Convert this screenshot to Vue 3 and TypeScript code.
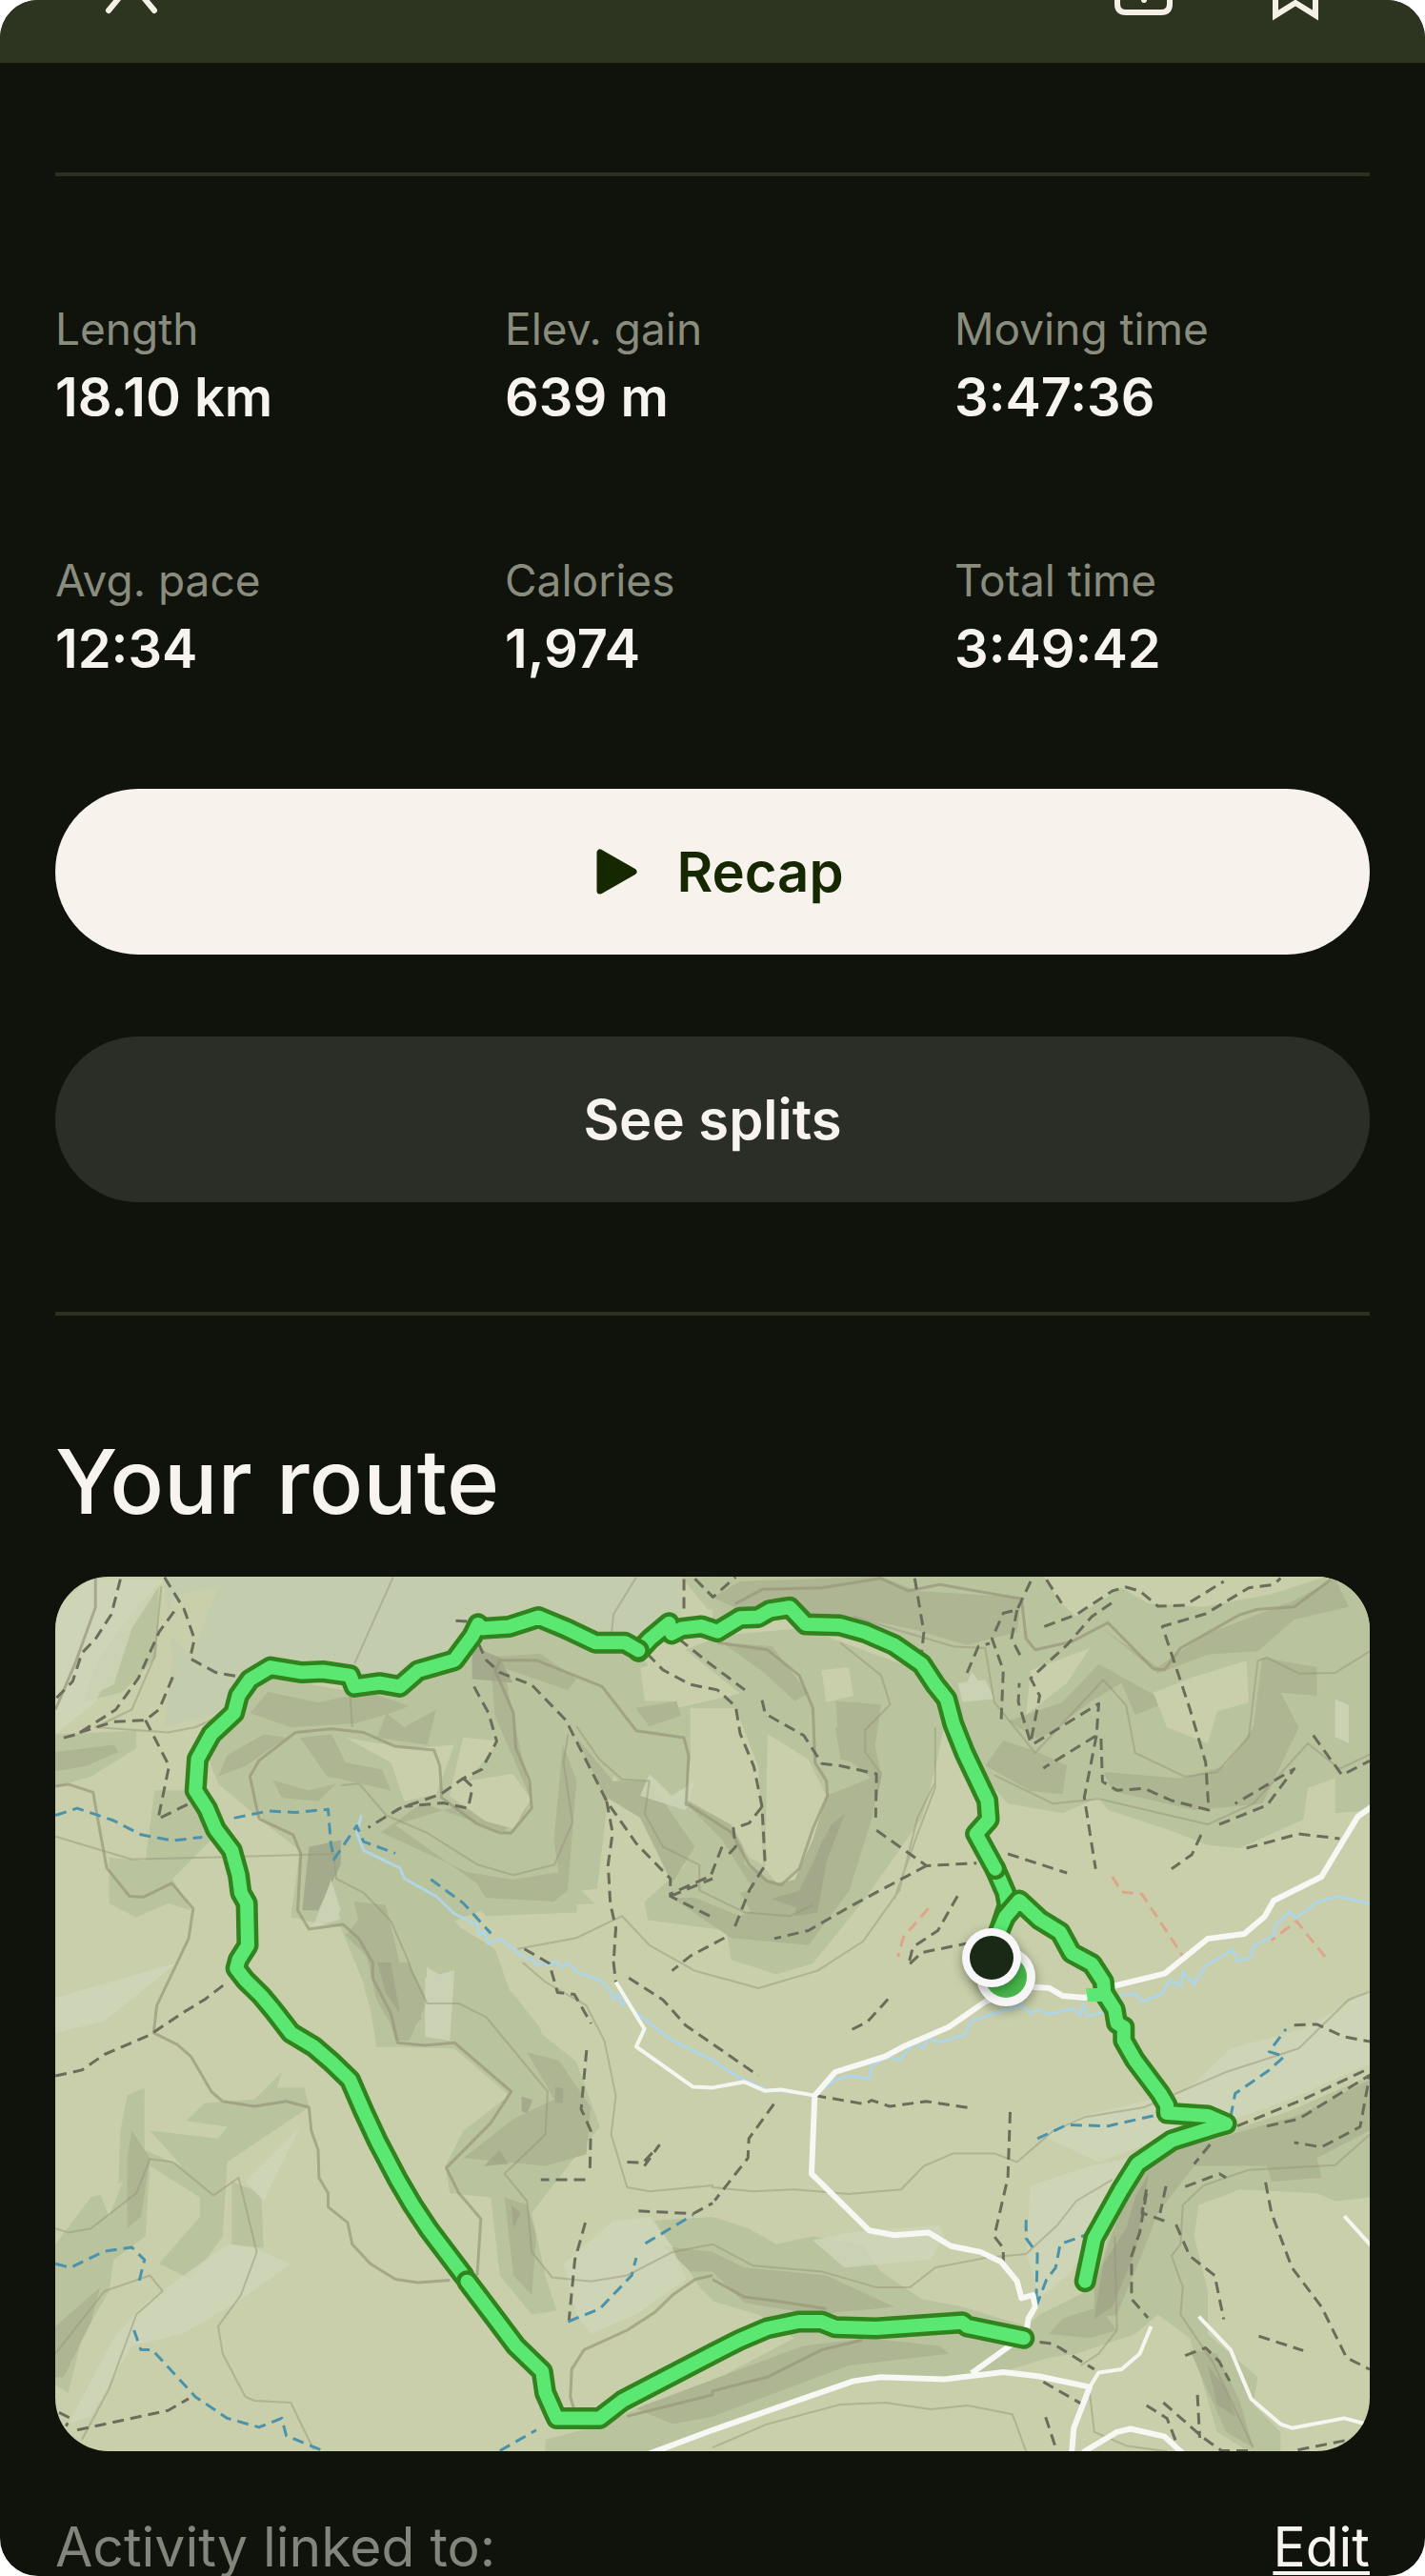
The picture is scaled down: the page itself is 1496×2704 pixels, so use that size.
<script setup lang="ts">
interface Stat {
  label: string
  value: string
}

interface Tile {
  x: number
  y: number
  sx: number
  sy: number
}

interface Layer {
  name: string
  shapes: string
}

const stats: Stat[] = [
  { label: 'Length', value: '18.10 km' },
  { label: 'Elev. gain', value: '639 m' },
  { label: 'Moving time', value: '3:47:36' },
  { label: 'Avg. pace', value: '12:34' },
  { label: 'Calories', value: '1,974' },
  { label: 'Total time', value: '3:49:42' },
]

// The map data is stored per tile; every tile has its own origin and resolution.
const tiles: Record<string, Tile> = {
  A: { x: -58, y: -175, sx: 2.096, sy: 2.703 },
  B: { x: 690, y: -55, sx: 2.096, sy: 3 },
  C: { x: -58, y: 405, sx: 2.096, sy: 2.435 },
  D: { x: 690, y: 405, sx: 2.096, sy: 2.435 },
  E: { x: 242, y: -15, sx: 2.096, sy: 2.613 },
}

// A letter selects the tile, a slash starts a new sub-path.
function project(source: string): string {
  let tile = tiles.A
  return source
    .split('/')
    .map((part) => {
      const points: string[] = []
      let x: number | null = null
      for (const token of part.trim().split(/\s+/)) {
        if (tiles[token]) {
          tile = tiles[token]
        } else if (x === null) {
          x = Number(token)
        } else {
          const px = tile.x + x / tile.sx
          const py = tile.y + Number(token) / tile.sy
          points.push(`${px.toFixed(1)} ${py.toFixed(1)}`)
          x = null
        }
      }
      return `M${points.join('L')}`
    })
    .join('')
}

const relief: Layer[] = [
  { name: 'plateau', shapes: 'A 360 470 1500 470 1500 600 1420 680 1300 650 1185 590 1060 610 1000 710 880 780 770 750 595 730 480 860 360 900 380 700' },
  {
    name: 'mid',
    shapes: `A 520 820 600 760 780 800 900 790 1040 700 1060 640 1200 620 1400 700 1480 900 1568 900 1568 1060 1500 1180 1430 1060 1370 960 1340 1080 1310 1400 1060 1420 1000 1450 1080 1568 800 1568 760 1460 640 1440 660 1250 590 1180 480 1060 450 960
      / A 122 920 300 910 300 960 200 1040 122 1070
      / A 340 1080 430 1080 480 1200 380 1330 420 1420 370 1400 300 1440 240 1400 240 1270 320 1280
      / A 300 560 350 490 345 700 270 800 180 830 220 700
      / E 430 200 780 250 860 400 1000 360 880 240 960 200 1140 180 1400 300 1450 440 1430 560 1400 700 1270 930 1160 1100 1080 1130 980 1090 970 1010 790 980 790 930 880 830 760 650 650 460 640 700 640 960 440 970 340 800 340 500 230 370 0 460 0 350 230 360 400 330
      / E 870 40 1568 40 1568 140 1300 180 1140 100 1000 130 930 130
      / E 100 560 180 780 250 900 330 960 460 1060 500 1200 560 1290 640 1370 640 1568 450 1568 490 1450 370 1310 200 1330 180 1180 120 1000 30 980
      / B 0 165 1446 165 1446 900 1370 910 1370 800 1310 830 1300 930 1160 1020 1090 1010 1000 960 870 900 850 860 770 910 650 880 600 800 560 700 480 440 200 300 0 300
      / C 800 60 860 0 1060 10 1130 80 1190 170 1200 240 1270 260 1320 420 1250 520 1170 640 1200 800 1225 890 1170 900 1100 800 1080 600 990 590 980 520 1020 430 1120 340 1000 220 840 215
      / C 280 340 318 320 318 480 400 520 330 430 480 450 500 420 410 405 450 360 560 350 620 280 610 320 670 320 680 370 500 510 490 700 420 810 350 770 440 650 440 600 330 520 320 700 250 760 240 840 180 960 150 1100 122 1080 122 720 200 600 260 580 265 430
      / C 510 560 575 590 580 730 510 720
      / C 1440 660 1570 650 1570 865 1540 830 1500 760
      / D 0 650 80 680 140 720 220 700 330 720 370 790 460 860 550 880 690 930 720 900 840 830 870 700 900 600 960 500 1140 430 1270 380 1446 290 1446 600 1370 610 1330 590 1160 580 1070 620 1060 700 1090 840 1090 950 1200 1060 1190 1130 1250 1200 1250 1250 1180 1250 1110 1200 1050 960 980 900 930 950 800 1000 740 1010 600 1060 400 1060 300 1075 0 1200 0 1070 180 960 100 900 0 865
      / C 1200 1250 1200 1220 1330 1180 1420 1130 1570 1066 1570 1200 1430 1250`,
  },
  {
    name: 'dark',
    shapes: `A 590 800 700 830 810 800 900 840 860 860 780 890 640 900 550 860
      / A 580 920 630 930 540 1010 480 1040 500 980
      / A 122 970 250 950 260 970 190 1010 122 1025
      / A 660 930 730 920 760 1000 840 1020 860 1080 760 1050 720 1040
      / A 850 860 890 900 960 850 940 950 830 930
      / A 600 1050 680 1080 740 1060 700 1110 620 1100
      / A 760 1490 820 1400 850 1470 860 1568 820 1568
      / E 450 260 560 250 640 320 620 350 480 290 500 420 540 650 480 740 390 700 300 660 210 740 400 850 500 870 600 850 590 760 610 500 640 600 620 900 590 930 440 920 420 880 240 720 400 660 520 700 540 650 460 420
      / E 640 480 720 600 800 600 900 780 850 880 780 700 700 640
      / E 770 400 860 380 870 420 800 450
      / E 890 500 970 560 1000 700 1010 830 1060 870 1110 880 1150 800 1190 640 1310 580 1290 700 1240 900 1150 1050 980 1030 850 920 900 920 1000 970 1050 940 960 760 880 660
      / E 960 220 1070 230 1150 360 1120 380 1050 300
      / E 1210 380 1310 390 1290 560 1220 540
      / E 150 930 220 940 270 1200 300 1250 250 1310 200 1200
      / C 820 0 900 0 940 100 900 200 870 200
      / C 1160 230 1230 250 1300 370 1290 490 1200 520 1020 500 1130 400 1220 350
      / C 1110 600 1160 620 1180 700 1170 850 1130 800
      / C 290 430 330 500 310 650 280 680 280 500
      / C 122 930 220 830 200 920 140 1060 122 1060
      / C 1400 1140 1570 1066 1570 1160 1480 1180
      / C 1460 725 1570 740 1570 790 1520 790
      / B 0 230 60 180 370 165 450 210 680 230 670 340 560 380 440 330 300 290 190 290 150 240 60 270
      / B 860 330 980 450 1080 350 1280 240 1370 170 1400 260 1280 300 1200 400 1090 410 980 470
      / B 850 440 1000 560 930 600 900 500 830 560 720 680 650 620 770 560
      / B 1210 420 1330 450 1330 540 1250 530 1290 640 1210 880 1060 900 880 840 860 780 1030 800 1130 760 1190 640
      / B 640 680 720 720 780 760 770 850 700 840 600 760
      / B 270 640 350 650 370 780 300 980 240 1100 170 1240 90 1230 60 1160 160 1130 250 860 350 800 280 720
      / D 950 500 1140 440 1290 390 1446 300 1446 430 1330 500 1340 550 1230 560 1220 520 1060 520 980 640 940 760 890 900 840 910 840 830 880 690
      / D 0 740 70 780 250 800 400 880 230 900 70 870 0 790
      / D 0 1066 200 980 340 960 500 980 520 1000 300 1030 0 1160
      / D 770 910 850 880 890 940 830 960 740 950
      / D 1050 990 1110 1000 1160 1120 1190 1240 1130 1200`,
  },
  {
    name: 'deep',
    shapes: `A 680 1240 750 1220 750 1290 700 1420 665 1420
      / E 410 230 470 260 500 330 410 320
      / E 1130 900 1200 720 1230 690 1190 820 1170 960 1120 970
      / C 830 0 860 0 880 130 850 80
      / C 1100 480 1118 515 1065 520
      / C 1125 620 1145 640 1130 680
      / C 1148 342 1172 352 1160 386 1148 380
      / C 1222 318 1240 322 1238 360 1222 358
      / B 240 1000 270 950 250 1040 230 1160 190 1210 130 1180 200 1150
      / D 860 770 910 680 930 600 960 540 930 740 880 880 840 910
      / D 1090 1030 1130 1090 1150 1160 1110 1130`,
  },
  {
    name: 'base',
    shapes: `A 380 530 480 500 420 700 360 620
      / A 760 930 900 960 1000 950 960 1090 890 1110 860 1000
      / E 390 480 470 490 400 600 500 580 540 650 500 730 440 710 360 640
      / E 780 290 870 250 900 330 860 380 790 380
      / E 890 400 990 400 1040 560 1050 830 1020 810 980 720 880 650 890 540
      / E 1060 470 1150 540 1190 640 1160 760 1120 870 1080 880 1055 840
      / B 240 460 300 450 310 540 250 560
      / B 970 530 1060 480 1175 430 1180 560 1110 590 1090 690 1000 640
      / B 700 460 830 390 780 500 690 600
      / B 730 165 1350 165 1230 220 1080 260 960 250 900 200 800 290 760 240
      / E 650 900 780 880 800 1000 700 960 / C 220 590 270 560 240 650`,
  },
  {
    name: 'light',
    shapes: `A 122 560 200 480 360 480 280 640 210 830 122 920
      / A 220 640 290 620 250 780 180 820
      / A 730 1340 750 1420 710 1460
      / E 100 870 120 980 60 1000 / E 310 1110 365 1150 350 1280 310 1290
      / E 800 580 850 640 900 600 880 680 780 640
      / E 1490 350 1510 300 1550 370
      / C 122 90 390 0 230 150 122 180 / C 935 40 1000 20 990 200 935 190
      / C 540 560 660 420 580 610 / C 500 720 560 730 640 770 520 870 400 950 290 980 200 1160 150 1180 250 960 320 870
      / C 1240 770 1350 660 1430 650 1480 730 1510 810 1400 900 1300 950 1270 900
      / D 700 570 830 520 920 500 860 660 790 790 720 860 690 740
      / D 720 440 820 390 1040 330 1140 220 1300 170 1446 70 1446 260 1270 350 1150 400 1010 440 850 510
      / D 220 710 300 690 500 670 510 700 480 760 290 780
      / B 540 500 600 490 620 550 550 560 / B 1370 550 1400 570 1400 690 1370 670`,
  },
]

const contours = `A 210 475 210 560 165 720 122 850
  / A 122 1068 150 1062 205 1085 215 1160 235 1300 285 1380 315 1382 378 1343 425 1415 415 1500 390 1568 C 345 110 338 180 390 210 420 240 465 330 490 355 560 368 630 355 680 370 685 430 700 480 702 550 722 590 722 625 765 665 775 720 815 770 870 810 920 818 990 812
  / A 570 1160 550 1040 570 995 650 915 730 905 800 915 870 955 955 965 968 1010 972 1100 1050 1175 1100 1200 1125 1200 1170 1130 1165 1050 1135 960 1130 860 1090 740 1100 710 1180 710 1325 785 1400 910 1505 930 1515 980 1510 1120 E 880 660 980 740 1020 830 1060 875 1090 885 1130 840 1160 730 1192 640 1190 600 1165 550 1160 400 1130 310 1060 240 950 220
  / A 570 1160 645 1205 662 1260 655 1420 680 1473 755 1460 790 1500 820 1568 C 820 40 860 130 875 205 935 212 1000 205 1125 330 1080 410 982 525 1010 590 1058 655 1050 800
  / B 50 250 110 205 240 200 370 170 430 210 500 190 680 235 690 360 710 395 790 370 870 310 970 455 995 458 1030 390 1160 285 1200 268 1280 260 1360 175
  / C 1568 800 1530 810 1480 850 1440 895 1380 940 1285 990 1258 1040 1255 1110 1265 1150
  / C 1380 1160 1568 1105 D 0 1095 120 1060 240 990 330 965 / D 0 810 70 855 140 865 250 885`

const minorContours = `A 865 475 780 720 / A 770 800 775 900 / A 750 1065 790 1060 850 1150 940 1200 1050 1290 1130 1320 1220 1290 1260 1170 1240 1000 1250 920
  / A 1400 475 1350 580 1345 640 / A 735 1270 740 1330 800 1370 860 1450 900 1568 C 905 20 940 105 1010 105 1070 140 1205 330 1200 440 1110 540 1160 610 1170 740 1215 805 1300 815 1380 800 1480 740 1568 720
  / A 122 1210 290 1275 740 1260 / A 355 500 340 700 290 850 210 900 370 915 430 900 490 865
  / E 640 450 690 540 740 595 800 600 790 690 830 780 910 830 910 900 1010 960 1110 970 1160 940
  / E 510 1060 640 1030 740 970 800 1050 900 1120 1040 1168 1170 1120 1270 1040 1350 900 1390 700 1430 600
  / E 1220 220 1310 310 1330 390 1275 460 1275 520 1310 580 1300 640
  / C 122 680 150 690 200 680 300 590 330 502 380 510 470 595 525 550 565 740 530 850 480 930 490 1000 540 1110 560 1120 640 1125 690 1245
  / C 122 1000 230 840 330 800 358 840 300 900 240 1090 180 1220
  / C 1150 0 1200 50 1290 110 1330 200 1355 340 1345 440 1380 575 1430 585 1568 570 D 0 575 90 585 180 580 300 592 415 580 465 520 530 488 620 488 670 510 750 430 820 395 950 370 1130 280 1290 220 1400 95 1446 75
  / D 0 720 90 775 240 790 360 830 435 830 490 780 600 755 690 745 760 670 800 610 880 555
  / D 1446 440 1370 518 1180 530 1080 570 1035 620 1030 720 1010 750 1035 830 1030 900 1100 1020 1190 1240
  / D 885 700 890 940 850 1000 810 1030 / D 0 1240 120 1180 280 1130 380 1125 480 1142 560 1132 660 1155 690 1250
  / D 830 1100 840 1200 910 1235 1000 1250 / B 310 290 400 330 530 385 600 390 620 560 710 720 860 490 910 570 930 720 1040 795 1110 780 1180 670 1200 430 1220 420 1290 470 1370 468 1446 400
  / B 490 640 490 830 450 980 400 1180 / B 620 790 750 880 850 865 1090 945 1190 880 1310 690 1380 770 1446 725`

const trails = `A 265 480 245 580 210 650 180 690 160 770 122 820 / A 383 572 350 630 305 760 255 850 170 920 135 932
  / A 362 475 405 565 428 650 418 705 475 745 530 758 / A 380 758 350 850 320 880 250 885 175 915 / A 320 880 372 1010 348 1160 415 1118
  / A 1003 598 1030 600 1070 710 1100 745 1170 780 1245 880 1335 1110 1400 1230 1475 1330 1475 1380 1568 1440
  / A 1043 785 1075 860 1093 940 1060 1020 1020 1045 970 1090 880 1130 810 1185 / A 1020 1045 1040 1070 1030 1130 975 1115 890 1125
  / A 1335 1110 1348 1200 1338 1290 1343 1400 1355 1470 1350 1568 C 1350 0 1355 50 / A 1475 1380 1568 1330
  / A 1505 480 1505 570 / A 1530 480 1568 530 / E 900 45 940 95 990 40
  / E 795 250 830 295 890 335 950 350 990 395 1000 470 1030 560 1048 670 1055 830 1020 900 988 1000
  / E 865 210 930 275 1010 350 / E 1048 378 1055 415 1140 475 1180 552 1220 558 1300 580 1298 700
  / E 1048 670 1020 715 985 730 990 780 975 800 / E 960 780 935 860 845 910
  / E 1300 735 1410 832 1520 825 / E 1410 832 1330 885 1240 945 1150 1010 1075 1032
  / E 965 1030 890 1080 850 1120 / E 1478 915 1435 1010 1380 1055 1370 1105 1400 1070 1500 1045
  / E 525 1060 580 1100 598 1180 635 1185 672 1265 / E 755 1140 830 1200 880 1270 1040 1408
  / E 1325 1198 1280 1260 1235 1288 / E 662 1338 650 1500 C 1285 390 1300 430 1298 530 / C 1288 555 1190 555
  / C 1405 635 1525 642 1568 615 / C 1288 665 1265 760 1252 915 / C 1380 510 1415 512 1450 468 1418 520
  / C 122 290 180 275 230 235 330 185 400 130 450 95 495 55 / C 170 1195 370 1145 415 1115 / C 130 1150 155 1165 145 1185
  / B 445 170 465 340 460 405 / B 700 180 670 270 640 280 615 360 640 460 635 625 / B 670 270 658 360 683 430
  / B 560 468 585 385 610 375 / B 735 175 768 248 / B 730 322 800 285 880 210 910 198 940 210 980 258 1040 255 1125 180
  / B 878 248 835 290 780 380 700 485 720 540 700 688 673 560 675 500 / B 708 690 850 565 845 665 728 768
  / B 845 665 818 860 843 1085 / B 855 675 858 810 890 838 950 832 1010 870 1092 900 1085 750 1050 580 990 322 1085 282 1180 200 1235 190 1250 170
  / B 1115 945 1220 885 1280 770 1150 880 / B 1075 978 1055 1040 1010 1085 / B 1175 1020 1290 975 1380 990
  / B 1322 665 1385 790 1446 745 / B 650 1038 780 1098
  / D 225 340 335 362 350 352 390 368 470 355 570 372 / D 135 362 80 450 78 500 5 608 / D 655 382 650 550 620 700 640 730 640 770
  / D 1280 160 1330 158 1390 190 1446 202 / D 1155 418 1300 350 1446 270 / D 1220 418 1290 400 1446 288 1425 420 1340 472 1280 460
  / D 1095 465 1060 515 / D 1040 573 1115 540 1130 550 / D 955 580 945 640 1005 665 / D 998 572 985 640 / D 955 590 940 690 922 750 922 860 958 908
  / D 1020 670 1050 750 1105 800 1125 912 / D 1217 562 1230 640 1275 780 1340 880 1395 1010 1446 1040 / D 1202 955 1300 992
  / D 1040 1005 1085 985 1115 1020 1138 1070 / D 720 970 750 975 840 1040 / D 728 1072 815 1130 / D 733 1162 758 1250
  / D 955 1132 1000 1165 1025 1240 / D 992 1125 1080 1215 1120 1248 1180 1248 / D 1067 1105 1072 1215 / D 1288 1246 1400 1220`

const waterTrails = `A 122 1150 170 1130 250 1165 310 1205 380 1222 445 1212 / A 515 1158 590 1138 650 1142 722 1133 728 1230 735 1275 785 1180 800 1225 870 1258
  / A 948 1332 1020 1400 1080 1485 / C 122 770 155 780 230 738 290 728 318 760 305 820 / C 295 940 310 990 335 990 430 1110 500 1165 570 1188 620 1165 630 1210 715 1250
  / C 1100 1248 1180 1195 / C 1250 918 1320 885 1390 800 1400 755 / C 1420 718 1525 645
  / D 715 450 780 415 870 418 985 388 / D 690 658 690 705 715 745 712 880 735 810 755 780 765 720 825 695
  / D 1140 395 1150 335 1225 275 1258 240 1225 228 1262 170`

const closedTrails = 'B 475 1210 420 1300 408 1362 / B 880 1110 900 1158 945 1165 1035 1360 / B 1348 1362 1285 1250 1230 1310'

const stream = `A 795 1150 785 1200 800 1250 880 1300 890 1330 960 1380 1000 1430 1050 1460 1055 1490 1065 1480 1075 1515 1100 1500 1150 1550
  C 1170 -8 1185 8 1195 -4 1205 8 1222 -4 1235 12 1250 2 1270 25 1320 45 1345 75 1350 95 1362 82 1370 110 1378 95 1390 120 1480 200 1568 250
  D 25 270 60 295 120 325 225 338 270 300 300 290 345 297 350 265 385 240 410 250 445 205 465 220 475 190 495 205 555 185 570 150 620 130 680 110 700 130 715 122 740 132 790 118 810 135 815 105 825 138 880 120 900 85 930 80 945 100 990 80 1005 45 1030 60 1035 25 1060 55
  B 1085 1390 1145 1340 1155 1375 1185 1365 1190 1330 1235 1295 1240 1260 1270 1220 1285 1240 1330 1190 1375 1172 1450 1195`

const roads = `B 1450 890 1420 920 1340 1110 1235 1185 1215 1235 1170 1290 1090 1305 995 1415 880 1455
  D 820 90 770 85 740 65 690 62 600 100 520 165 420 215 380 240 270 280 225 340 218 540 345 685 400 697 475 690 525 725 590 740 635 765 670 815 680 858 705 850 710 880 695 910 690 950 570 1050
  / C 1430 1255 1568 1195 D 310 1070 370 1060 510 1065 640 1047 720 1058 830 1085 795 1190 790 1260 / D 815 1252 890 1200 920 1192 995 1212 1040 1260`

const lanes = `C 1355 50 1418 170 1400 215 1525 318 1568 320 D 70 305 115 328 150 325 225 340
  / D 830 1085 850 1048 900 1040 940 1000 965 930 / D 1070 905 1140 990 1185 1115 1250 1180 1275 1190 1390 1165 1440 1180 / D 1390 648 1450 725`

const route: string[] = [
  'B 622 1085 645 1160 650 1200 630 1285',
  `B 628 1290 645 1235 675 1185 720 1245 765 1285 790 1350 835 1385 860 1440
   D 862 78 885 120 890 155 905 165 905 200 930 250 985 335 1000 365 1000 385 1090 392 1130 412 1100 422 1010 455 935 515 900 580 840 705 820 815`,
  `A 1405 685 1430 650 1472 605 1478 635 1500 620
   E 915 175 950 190 1000 152 1040 150 1065 132 1100 125 B 170 262 205 315 280 318 335 340 400 380 460 440 490 505 515 550 530 630 555 720 605 870 608 930 580 975 622 1085`,
  `C 1020 800 945 685 908 620 875 555 830 455 800 380 770 300 730 255 690 215 640 180 600 120 575 85 540 45 520 15
   A 525 1560 545 1520 543 1400 530 1370 525 1320 510 1250 475 1190 455 1130 430 1080 435 990 465 920 515 860 525 810 550 765 595 730 665 745 710 742 770 753 780 785 835 775 880 785 920 740 1000 710 1040 640 1052 608 1062 620 1120 615 1185 588 1245 620 1310 660 1375 660 1405 682`,
  `C 1028 815 1135 980 1193 1045 1200 1100 1225 1165 1320 1165 1370 1120 1568 1000
   D 60 965 120 935 190 918 240 918 270 932 360 935 550 920 560 930 685 960`,
]
</script>

<template>
  <main class="screen">
    <header class="topbar">
      <button class="icon-button" type="button" aria-label="Close">
        <svg width="64" height="96" viewBox="0 0 64 96" fill="none">
          <path d="M6-17 54 41M54-17 6 41" />
        </svg>
      </button>
      <div class="actions">
        <button class="icon-button" type="button" aria-label="Share">
          <svg width="72" height="96" viewBox="0 0 72 96" fill="none">
            <path d="M20 -2H17Q8 -2 8 7V34Q8 43 17 43H54Q63 43 63 34V7Q63 -2 54 -2H52M36 30V-20M22 -8 36 -22 50 -8" />
          </svg>
        </button>
        <button class="icon-button" type="button" aria-label="Save">
          <svg width="72" height="96" viewBox="0 0 72 96" fill="none">
            <path d="M15-12H57V46L36 33 15 46Z" />
          </svg>
        </button>
      </div>
    </header>

    <div class="content">
      <hr class="rule" />

      <dl class="stats">
        <div v-for="stat in stats" :key="stat.label" class="stat">
          <dt>{{ stat.label }}</dt>
          <dd>{{ stat.value }}</dd>
        </div>
      </dl>

      <div class="buttons">
        <button class="pill primary" type="button">
          <svg width="60" height="48" viewBox="-16 0 60 48" aria-hidden="true">
            <path d="M4 4V44L39 24Z" fill="currentColor" stroke="currentColor" stroke-width="7" stroke-linejoin="round" />
          </svg>
          Recap
        </button>
        <button class="pill secondary" type="button">See splits</button>
      </div>

      <hr class="rule" />

      <h1>Your route</h1>

      <svg class="map" viewBox="0 0 1380 918" role="img" aria-label="Map of your route">
        <rect class="ground" width="1380" height="918" />
        <path v-for="layer in relief" :key="layer.name" :class="layer.name" :d="project(layer.shapes)" />
        <path class="line contour minor" :d="project(minorContours)" />
        <path class="line contour" :d="project(contours)" />
        <path class="line stream" :d="project(stream)" />
        <path class="line trail" :d="project(trails)" />
        <path class="line trail water" :d="project(waterTrails)" />
        <path class="line trail closed" :d="project(closedTrails)" />
        <path class="line lane" :d="project(lanes)" />
        <path class="line road" :d="project(roads)" />
        <g v-for="(segment, index) in route" :key="index">
          <path class="line casing" :d="project(segment)" />
          <path class="line track" :d="project(segment)" />
        </g>
        <path class="spur" d="M1082 432h20v14h-18z" />
        <g class="pin">
          <circle cx="998" cy="420" r="31" fill="#f5f5f5" />
          <circle cx="998" cy="420" r="22" fill="#48b84b" />
        </g>
        <g class="pin">
          <circle cx="983" cy="400" r="31" fill="#f7f7f9" />
          <circle cx="983" cy="400" r="23" fill="#1a2916" />
        </g>
      </svg>

      <div class="linked">
        <span>Activity linked to:</span>
        <a href="#edit">Edit</a>
      </div>
    </div>
  </main>
</template>

<style>
html,
body {
  margin: 0;
  background: #fff;
}
</style>

<style scoped>
.screen {
  box-sizing: border-box;
  min-height: 100vh;
  overflow: hidden;
  border-radius: 40px;
  background: #10130c;
  color: #f7f3ed;
  font-family: Inter, "Noto Sans", sans-serif;
}

button {
  margin: 0;
  border: 0;
  padding: 0;
  font: inherit;
  cursor: pointer;
}

.topbar {
  display: flex;
  justify-content: space-between;
  height: 66px;
  padding: 0 100px 0 108px;
  background: #2d341f;
  overflow: hidden;
}

.actions {
  display: flex;
  gap: 87px;
}

.icon-button {
  height: 96px;
  margin-top: -30px;
  background: none;
  color: #f5f0e6;
}

.icon-button svg {
  display: block;
  overflow: visible;
}

.icon-button path {
  stroke: currentColor;
  stroke-width: 6;
  stroke-linecap: round;
}

.content {
  padding: 115px 58px 0;
}

.rule {
  height: 4px;
  margin: 0;
  border: 0;
  background: #2a311e;
}

.stats {
  display: grid;
  grid-template-columns: repeat(3, 1fr);
  gap: 124px 36px;
  margin: 0;
  padding: 128px 0 111px;
}

dt {
  color: #8a8c7e;
  font-size: 46px;
  line-height: 64px;
}

dd {
  margin: 4px 0 0;
  font-size: 56px;
  font-weight: 600;
  line-height: 72px;
}

.buttons {
  display: flex;
  flex-direction: column;
  gap: 86px;
  margin-bottom: 115px;
}

.pill {
  display: flex;
  align-items: center;
  justify-content: center;
  gap: 40px;
  height: 174px;
  border-radius: 87px;
  font-size: 58px;
  font-weight: 600;
}

.primary {
  background: #f7f3ec;
  color: #152800;
}

.secondary {
  background: #2b2d27;
  color: #f7f3ed;
}

h1 {
  margin: 114px 0 40px;
  font-size: 94px;
  font-weight: 500;
  line-height: 120px;
}

.map {
  display: block;
  width: 100%;
  border-radius: 56px;
}

.ground,
.base {
  fill: #c8cfaa;
}

.plateau {
  fill: #c4ccae;
}

.mid {
  fill: #b9c39e;
}

.dark {
  fill: #adb592;
}

.deep {
  fill: #9fa587;
  opacity: 0.8;
}

.light {
  fill: #cfd6b9;
  opacity: 0.8;
}

.line {
  fill: none;
  stroke-linejoin: round;
}

.contour {
  stroke: #98967b;
  stroke-width: 3;
  opacity: 0.7;
}

.minor {
  stroke-width: 2;
  opacity: 0.5;
}

.stream {
  stroke: #b0d5e4;
  stroke-width: 3;
}

.trail {
  stroke: #6b6d5b;
  stroke-width: 3;
  stroke-dasharray: 12 7;
}

.water {
  stroke: #4b93ab;
}

.closed {
  stroke: #dfa58c;
}

.lane {
  stroke: #f5f6f0;
  stroke-width: 4;
}

.road {
  stroke: #f7f7f4;
  stroke-width: 6;
}

.casing {
  stroke: #30831d;
  stroke-width: 23;
  stroke-linecap: round;
}

.track {
  stroke: #5ae873;
  stroke-width: 14;
  stroke-linecap: round;
}

.spur {
  fill: #5ae873;
}

.pin {
  filter: drop-shadow(0 4px 6px rgb(0 0 0 / 35%));
}

.linked {
  display: flex;
  justify-content: space-between;
  padding-top: 71px;
  font-size: 57px;
  line-height: 60px;
}

.linked span {
  color: #84857a;
}

.linked a {
  color: #f7f3ed;
  text-decoration-thickness: 4px;
  text-underline-offset: 5px;
}
</style>
